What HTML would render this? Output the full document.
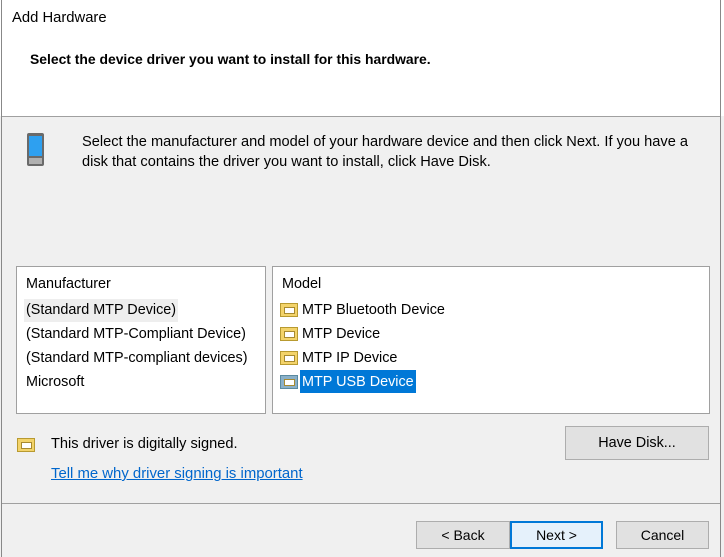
<!DOCTYPE html>
<html><head><style>
*{margin:0;padding:0;box-sizing:border-box}
body{width:724px;height:557px;overflow:hidden;background:#f0f0f0;font-family:"Liberation Sans",sans-serif;color:#000;position:relative}
.a{position:absolute}
.t{font-size:14.4px;white-space:nowrap}
.btn{position:absolute;background:#e1e1e1;border:1px solid #adadad;font-size:14px;text-align:center}
.ico{position:absolute;width:18px;height:14px;background:#f3d36a;border:1px solid #b89a30}
.ico:after{content:"";position:absolute;left:3px;top:3px;width:9px;height:5px;background:#fff;border:1px solid #a88a30}
</style></head><body>
<div class="a" style="left:0;top:0;width:724px;height:116px;background:#fff"></div>
<div class="a" style="left:1px;top:0;width:1px;height:557px;background:#888"></div>
<div class="a" style="left:720px;top:0;width:1px;height:557px;background:#888"></div>
<div class="a" style="left:2px;top:116px;width:718px;height:1px;background:#a0a0a0"></div>
<div class="a t" style="left:12px;top:10px;font-size:14.8px">Add Hardware</div>
<div class="a t" style="left:30px;top:51px;font-weight:bold;font-size:13.9px">Select the device driver you want to install for this hardware.</div>
<svg class="a" style="left:26px;top:133px" width="20" height="35"><rect x="1" y="0" width="17" height="33" rx="2" fill="#6a6a6a"/><rect x="3" y="3" width="13" height="20" fill="#2ea0f0"/><rect x="3" y="25" width="13" height="6" fill="#b0b0b0"/></svg>
<div class="a t" style="left:82px;top:132px;line-height:20px;font-size:14.6px">Select the manufacturer and model of your hardware device and then click Next. If you have a<br>disk that contains the driver you want to install, click Have Disk.</div>
<div class="a" style="left:16px;top:266px;width:250px;height:148px;background:#fff;border:1px solid #a0a0a0"></div>
<div class="a t" style="left:26px;top:276px">Manufacturer</div>
<div class="a" style="left:24px;top:299px;width:154px;height:23px;background:#eee"></div>
<div class="a t" style="left:26px;top:302px">(Standard MTP Device)</div>
<div class="a t" style="left:26px;top:326px">(Standard MTP-Compliant Device)</div>
<div class="a t" style="left:26px;top:350px">(Standard MTP-compliant devices)</div>
<div class="a t" style="left:26px;top:374px">Microsoft</div>
<div class="a" style="left:272px;top:266px;width:438px;height:148px;background:#fff;border:1px solid #a0a0a0"></div>
<div class="a t" style="left:282px;top:276px">Model</div>
<div class="ico" style="left:280px;top:303px"></div><div class="a t" style="left:302px;top:302px">MTP Bluetooth Device</div>
<div class="ico" style="left:280px;top:327px"></div><div class="a t" style="left:302px;top:326px">MTP Device</div>
<div class="ico" style="left:280px;top:351px"></div><div class="a t" style="left:302px;top:350px">MTP IP Device</div>
<div class="ico" style="left:280px;top:375px;background:#8ab0c8;border-color:#5a8aa0"></div>
<div class="a" style="left:300px;top:370px;width:116px;height:23px;background:#0078d7"></div>
<div class="a t" style="left:302px;top:374px;color:#fff">MTP USB Device</div>
<div class="ico" style="left:17px;top:438px"></div>
<div class="a t" style="left:51px;top:436px;font-size:14.6px">This driver is digitally signed.</div>
<div class="a t" style="left:51px;top:466px;color:#0066cc;text-decoration:underline;font-size:14.9px">Tell me why driver signing is important</div>
<div class="btn" style="left:565px;top:426px;width:144px;height:34px;line-height:32px;font-size:14.4px">Have Disk...</div>
<div class="a" style="left:2px;top:503px;width:718px;height:1px;background:#a0a0a0"></div>
<div class="btn" style="left:416px;top:521px;width:94px;height:28px;line-height:26px">&lt; Back</div>
<div class="btn" style="left:510px;top:521px;width:93px;height:28px;line-height:24px;border:2px solid #0078d7;background:#e5f1fb">Next &gt;</div>
<div class="btn" style="left:616px;top:521px;width:93px;height:28px;line-height:26px">Cancel</div>
</body></html>
